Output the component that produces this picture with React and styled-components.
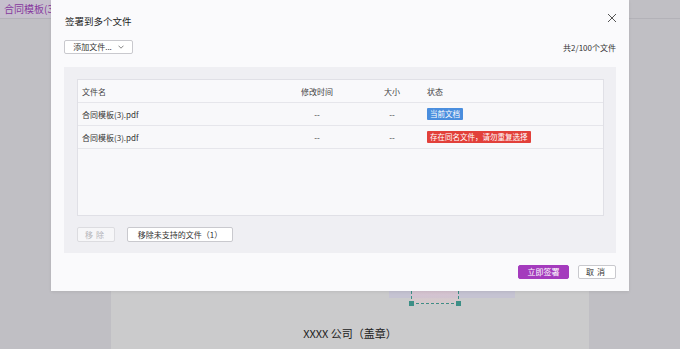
import React from "react";
import styled, { createGlobalStyle } from "styled-components";

const Global = createGlobalStyle`
  html, body { margin: 0; padding: 0; }
  body { font-family: "Noto Sans CJK SC", "Noto Sans", sans-serif; }
  #root { width: 680px; height: 349px; }
`;

const Screen = styled.div`
  position: relative;
  width: 680px;
  height: 349px;
  overflow: hidden;
  background: #c0bfc4;
  display: flex;
  flex-direction: column;
`;

const TabBar = styled.div`
  height: 18px;
  border-bottom: 1px solid #b3b2b8;
  display: flex;
  align-items: stretch;
`;

const Tab = styled.div`
  background: #c6c0cd;
  color: #86389e;
  font-size: 10px;
  line-height: 18px;
  padding: 0 4px;
  white-space: nowrap;
`;

const Workspace = styled.div`
  flex: 1;
  display: flex;
  justify-content: center;
  padding-left: 20px;
`;

const DocPage = styled.div`
  width: 478px;
  background: #cbcbcc;
  display: flex;
  flex-direction: column;
  padding-top: 272px;
`;

const SignArea = styled.div`
  position: relative;
  margin-left: 278px;
  width: 126px;
  height: 12px;
`;

const SignStrip = styled.div`
  height: 7px;
  background: #c5c3d2;
`;

const SelectBox = styled.div`
  position: absolute;
  left: 22px;
  top: -10px;
  width: 46px;
  height: 22px;
  border-left: 1px dashed #3d8f86;
  border-right: 1px dashed #3d8f86;
  border-bottom: 1px dashed #3d8f86;
  background: linear-gradient(to bottom, rgba(232, 196, 206, 0.7), rgba(232, 196, 206, 0.25));
`;

const Handle = styled.span`
  position: absolute;
  bottom: -3px;
  ${(p) => (p.$side === "left" ? "left: -3px;" : "right: -3px;")}
  width: 5px;
  height: 5px;
  background: #3d8f86;
`;

const Company = styled.div`
  margin-top: 21px;
  text-align: center;
  font-size: 11px;
  line-height: 18px;
  color: #222;
`;

const Overlay = styled.div`
  position: absolute;
  inset: 0;
  display: flex;
  justify-content: center;
  align-items: flex-start;
`;

const Modal = styled.div`
  width: 578px;
  height: 291px;
  box-sizing: border-box;
  background: #fafafc;
  padding: 0 13px;
  display: flex;
  flex-direction: column;
  box-shadow: 0 1px 3px rgba(0, 0, 0, 0.08);
`;

const Header = styled.div`
  display: flex;
  justify-content: space-between;
  align-items: flex-start;
  padding-top: 14px;
  padding-left: 1px;
`;

const Title = styled.div`
  font-size: 9.5px;
  line-height: 14px;
  color: #222;
`;

const Close = styled.button`
  border: none;
  background: none;
  padding: 0;
  margin-top: -1px;
  margin-right: -1px;
  width: 10px;
  height: 10px;
  display: flex;
  cursor: pointer;
`;

const Toolbar = styled.div`
  margin-top: 12px;
  display: flex;
  justify-content: space-between;
  align-items: center;
`;

const Button = styled.button`
  box-sizing: border-box;
  height: ${(p) => p.$h || 14}px;
  padding: 0 ${(p) => p.$px ?? 8}px;
  font-family: inherit;
  font-size: 8px;
  line-height: 1;
  letter-spacing: ${(p) => p.$ls || 0}px;
  border-radius: 2px;
  display: inline-flex;
  align-items: center;
  justify-content: center;
  gap: 6px;
  cursor: pointer;
  white-space: nowrap;
  width: ${(p) => (p.$w ? p.$w + "px" : "auto")};
  color: ${(p) =>
    p.$variant === "primary" ? "#fff" : p.$variant === "disabled" ? "#b5b5ba" : "#333"};
  background: ${(p) =>
    p.$variant === "primary" ? "#a43bbd" : p.$variant === "disabled" ? "#f6f6f8" : "#fff"};
  border: 1px solid
    ${(p) =>
      p.$variant === "primary" ? "#a43bbd" : p.$variant === "disabled" ? "#dcdce0" : "#c9c9ce"};
`;

const Count = styled.div`
  font-size: 8px;
  color: #333;
`;

const Panel = styled.div`
  margin-top: 13px;
  height: 186px;
  box-sizing: border-box;
  background: #efeff3;
  padding: 12px 12px 11px 13px;
  display: flex;
  flex-direction: column;
`;

const Table = styled.div`
  height: 137px;
  box-sizing: border-box;
  border: 1px solid #e0e0e6;
  background: #f8f8fa;
  display: flex;
  flex-direction: column;
`;

const Row = styled.div`
  display: grid;
  grid-template-columns: 199px 80px 70px 1fr;
  height: 23px;
  box-sizing: border-box;
  border-bottom: 1px solid #e6e6eb;
  align-items: center;
  font-size: 8px;
  color: ${(p) => (p.$head ? "#444" : "#333")};
  background: ${(p) => (p.$head ? "#f9f9fb" : "transparent")};
`;

const Cell = styled.div`
  padding-left: ${(p) => (p.$first ? 4 : 0)}px;
  text-align: ${(p) => (p.$center ? "center" : "left")};
  white-space: nowrap;
`;

const Tag = styled.span`
  display: inline-block;
  height: 12px;
  line-height: 12px;
  padding: 0 3px;
  font-size: 7.5px;
  color: #fff;
  border-radius: 1px;
  background: ${(p) => (p.$tone === "red" ? "#e2403a" : "#4a8ede")};
`;

const PanelActions = styled.div`
  margin-top: 11px;
  display: flex;
  gap: 12px;
`;

const Footer = styled.div`
  margin-top: 12px;
  display: flex;
  justify-content: flex-end;
  gap: 9px;
`;

const Chevron = () => (
  <svg width="6" height="4" viewBox="0 0 6 4">
    <path d="M0.5 0.7 L3 3.2 L5.5 0.7" fill="none" stroke="#666" strokeWidth="0.8" />
  </svg>
);

const XIcon = () => (
  <svg width="10" height="10" viewBox="0 0 10 10">
    <path d="M1 1 L9 9 M9 1 L1 9" stroke="#555" strokeWidth="1" fill="none" />
  </svg>
);

const files = [
  { name: "合同模板(3).pdf", tag: "当前文档", tone: "blue" },
  { name: "合同模板(3).pdf", tag: "存在同名文件，请勿重复选择", tone: "red" },
];

export default function App() {
  return (
    <>
      <Global />
      <Screen>
        <TabBar>
          <Tab>合同模板(3)</Tab>
        </TabBar>
        <Workspace>
          <DocPage>
            <SignArea>
              <SignStrip />
              <SelectBox>
                <Handle $side="left" />
                <Handle $side="right" />
              </SelectBox>
            </SignArea>
            <Company>XXXX 公司（盖章）</Company>
          </DocPage>
        </Workspace>
        <Overlay>
          <Modal>
            <Header>
              <Title>签署到多个文件</Title>
              <Close aria-label="关闭">
                <XIcon />
              </Close>
            </Header>
            <Toolbar>
              <Button $w={69} $px={0}>
                添加文件... <Chevron />
              </Button>
              <Count>共2/100个文件</Count>
            </Toolbar>
            <Panel>
              <Table>
                <Row $head>
                  <Cell $first>文件名</Cell>
                  <Cell $center>修改时间</Cell>
                  <Cell $center>大小</Cell>
                  <Cell>状态</Cell>
                </Row>
                {files.map((f, i) => (
                  <Row key={i}>
                    <Cell $first>{f.name}</Cell>
                    <Cell $center>--</Cell>
                    <Cell $center>--</Cell>
                    <Cell>
                      <Tag $tone={f.tone}>{f.tag}</Tag>
                    </Cell>
                  </Row>
                ))}
              </Table>
              <PanelActions>
                <Button $variant="disabled" $w={38} $h={15} $ls={3}>
                  移除
                </Button>
                <Button $w={106} $h={15}>
                  移除未支持的文件（1）
                </Button>
              </PanelActions>
            </Panel>
            <Footer>
              <Button $variant="primary" $w={51}>
                立即签署
              </Button>
              <Button $w={38} $ls={3}>
                取消
              </Button>
            </Footer>
          </Modal>
        </Overlay>
      </Screen>
    </>
  );
}
